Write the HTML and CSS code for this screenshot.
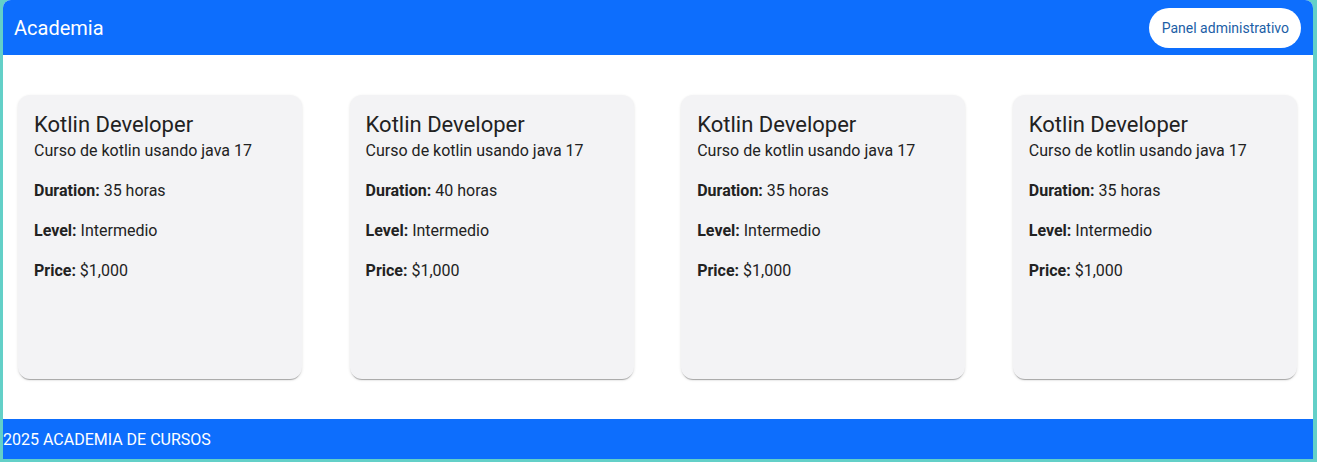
FILE: index.html
```html
<!DOCTYPE html>
<html lang="es">
<head>
<meta charset="utf-8">
<title>Academia</title>
<link rel="stylesheet" href="styles.css">
</head>
<body>
<div class="app">
  <header class="topbar">
    <span class="brand">Academia</span>
    <button class="admin-btn">Panel administrativo</button>
  </header>
  <main class="courses">
    <article class="card">
      <h2 class="card-title">Kotlin Developer</h2>
      <p class="card-sub">Curso de kotlin usando java 17</p>
      <p class="card-row"><strong>Duration:</strong> 35 horas</p>
      <p class="card-row"><strong>Level:</strong> Intermedio</p>
      <p class="card-row"><strong>Price:</strong> $1,000</p>
    </article>
    <article class="card">
      <h2 class="card-title">Kotlin Developer</h2>
      <p class="card-sub">Curso de kotlin usando java 17</p>
      <p class="card-row"><strong>Duration:</strong> 40 horas</p>
      <p class="card-row"><strong>Level:</strong> Intermedio</p>
      <p class="card-row"><strong>Price:</strong> $1,000</p>
    </article>
    <article class="card">
      <h2 class="card-title">Kotlin Developer</h2>
      <p class="card-sub">Curso de kotlin usando java 17</p>
      <p class="card-row"><strong>Duration:</strong> 35 horas</p>
      <p class="card-row"><strong>Level:</strong> Intermedio</p>
      <p class="card-row"><strong>Price:</strong> $1,000</p>
    </article>
    <article class="card">
      <h2 class="card-title">Kotlin Developer</h2>
      <p class="card-sub">Curso de kotlin usando java 17</p>
      <p class="card-row"><strong>Duration:</strong> 35 horas</p>
      <p class="card-row"><strong>Level:</strong> Intermedio</p>
      <p class="card-row"><strong>Price:</strong> $1,000</p>
    </article>
  </main>
  <footer class="footer">2025 ACADEMIA DE CURSOS</footer>
</div>
</body>
</html>
```
FILE: styles.css
```css
* { box-sizing: border-box; }
html, body { margin: 0; padding: 0; }
body {
  background: #63d0c8;
  font-family: Roboto, "Liberation Sans", sans-serif;
  color: #222;
  height: 462px;
  overflow: hidden;
}
.app {
  margin-left: 3px;
  width: 1310px;
  background: #fff;
  border-radius: 8px 8px 0 0;
  overflow: hidden;
}
.topbar {
  height: 55px;
  background: #0d6efd;
  display: flex;
  align-items: center;
  justify-content: space-between;
  padding: 0 12px 0 11px;
}
.brand {
  color: #fff;
  font-size: 20px;
}
.admin-btn {
  font-family: Roboto, "Liberation Sans", sans-serif;
  font-size: 14px;
  color: #1b5ea6;
  background: #fff;
  border: none;
  border-radius: 20px;
  height: 40px;
  padding: 0 12px 0 13px;
  margin-top: 1px;
}
.courses {
  display: grid;
  grid-template-columns: repeat(4, 284px);
  column-gap: 47.6px;
  padding: 40px 16px 40px 15px;
}
.card {
  height: 284px;
  background: #f3f3f5;
  border-radius: 12px;
  box-shadow: 0 2px 1px -1px rgba(0,0,0,0.3), 0 1px 3px rgba(0,0,0,0.12);
  padding: 16px 16px;
}
.card-title {
  margin: 0;
  font-size: 22px;
  font-weight: 400;
  line-height: 28px;
  color: #222;
}
.card-sub {
  margin: 0;
  font-size: 16px;
  line-height: 24px;
}
.card-row {
  margin: 16px 0 0;
  font-size: 16px;
  line-height: 24px;
}
.card-row strong { font-weight: 700; }
.footer {
  height: 40px;
  background: #0d6efd;
  color: #fff;
  font-size: 16px;
  display: flex;
  align-items: center;
}
```
